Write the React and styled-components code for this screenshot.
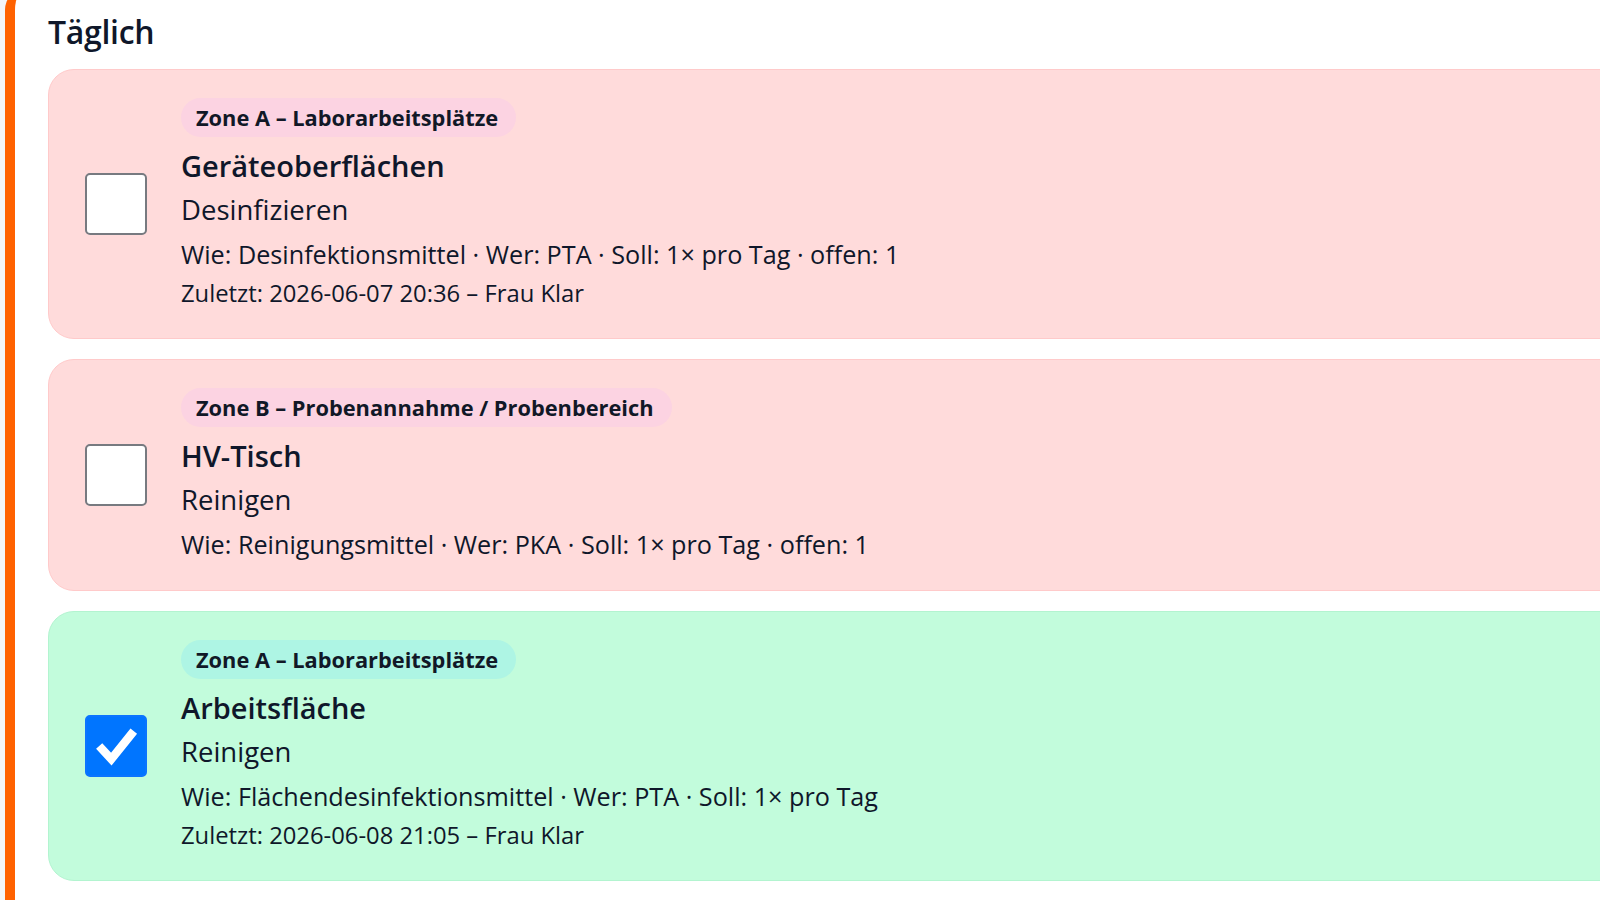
import React from 'react';
import styled, { createGlobalStyle } from 'styled-components';

const GlobalStyle = createGlobalStyle`
    html {
        overflow: hidden;
    }
    body {
        margin: 0;
        padding: 0;
        background: #f3f5f8;
        font-family: "Open Sans", "Noto Sans", sans-serif;
        color: #0f172a;
    }
`

const Page = styled.div`
    padding-left: 5px;
    padding-top: 1px;
`

const Section = styled.section`
    background: #ffffff;
    border-left: 10px solid #ff6200;
    border-top-left-radius: 22px;
    margin-top: -13px;
    padding: 20px 0 40px 33px;
    min-height: 940px;
`

const SectionTitle = styled.h2`
    margin: 0 0 13px;
    font-size: 32px;
    font-weight: 600;
    line-height: 48px;
    letter-spacing: -0.3px;
`

const TaskList = styled.div`
    display: flex;
    flex-direction: column;
    gap: 20px;
`

const TaskCard = styled.div`
    display: flex;
    align-items: center;
    gap: 34px;
    padding: 28px 36px 28px;
    margin-right: -40px;
    border-radius: 26px;
    background: ${({ done }) => (done ? '#c2fcdc' : '#ffdbdb')};
    border: 1.5px solid ${({ done }) => (done ? '#b3f4d0' : '#ffcaca')};
`

const CheckBox = styled.div`
    flex: 0 0 auto;
    width: 62px;
    height: 62px;
    box-sizing: border-box;
    border-radius: 5px;
    border: ${({ checked }) => (checked ? '2px solid #0b74ff' : '2px solid #777a80')};
    background: ${({ checked }) => (checked ? '#0075ff' : '#ffffff')};
    display: flex;
    align-items: center;
    justify-content: center;
`

const TaskBody = styled.div`
    display: flex;
    flex-direction: column;
    align-items: flex-start;
`

const ZoneBadge = styled.span`
    display: inline-flex;
    align-items: center;
    height: 39px;
    padding: 0 18px 0 15px;
    border-radius: 20px;
    background: ${({ done }) => (done ? '#aef5e4' : '#fcd3e2')};
    font-size: 21.8px;
    font-weight: 700;
    color: #111827;
`

const TaskTitle = styled.div`
    margin-top: 10px;
    font-size: 29px;
    font-weight: 600;
    line-height: 38px;
`

const TaskAction = styled.div`
    margin-top: 3px;
    font-size: 27.5px;
    line-height: 44px;
`

const TaskMeta = styled.div`
    margin-top: 4px;
    font-size: 25.2px;
    line-height: 36px;
`

const TaskLast = styled.div`
    margin-top: 4px;
    font-size: 23.8px;
    line-height: 34px;
`

const tasks = [
    {
        zone: 'Zone A – Laborarbeitsplätze',
        title: 'Geräteoberflächen',
        action: 'Desinfizieren',
        meta: 'Wie: Desinfektionsmittel · Wer: PTA · Soll: 1× pro Tag · offen: 1',
        last: 'Zuletzt: 2026-06-07 20:36 – Frau Klar',
        done: false,
    },
    {
        zone: 'Zone B – Probenannahme / Probenbereich',
        title: 'HV-Tisch',
        action: 'Reinigen',
        meta: 'Wie: Reinigungsmittel · Wer: PKA · Soll: 1× pro Tag · offen: 1',
        done: false,
    },
    {
        zone: 'Zone A – Laborarbeitsplätze',
        title: 'Arbeitsfläche',
        action: 'Reinigen',
        meta: 'Wie: Flächendesinfektionsmittel · Wer: PTA · Soll: 1× pro Tag',
        last: 'Zuletzt: 2026-06-08 21:05 – Frau Klar',
        done: true,
    },
];

const CheckMark = () => (
    <svg width="62" height="62" viewBox="0 0 62 62">
        <path d="M13 31 L26 45 L50 15" fill="none" stroke="#ffffff" strokeWidth="9" strokeLinejoin="miter" />
    </svg>
)

const Task = ({ task }) => (
    <TaskCard done={task.done}>
        <CheckBox checked={task.done}>{task.done && <CheckMark />}</CheckBox>
        <TaskBody>
            <ZoneBadge done={task.done}>{task.zone}</ZoneBadge>
            <TaskTitle>{task.title}</TaskTitle>
            <TaskAction>{task.action}</TaskAction>
            <TaskMeta>{task.meta}</TaskMeta>
            {task.last && <TaskLast>{task.last}</TaskLast>}
        </TaskBody>
    </TaskCard>
)

const App = () => (
    <>
        <GlobalStyle />
        <Page>
            <Section>
                <SectionTitle>Täglich</SectionTitle>
                <TaskList>
                    {tasks.map((task, i) => (
                        <Task key={i} task={task} />
                    ))}
                </TaskList>
            </Section>
        </Page>
    </>
)

export default App;
